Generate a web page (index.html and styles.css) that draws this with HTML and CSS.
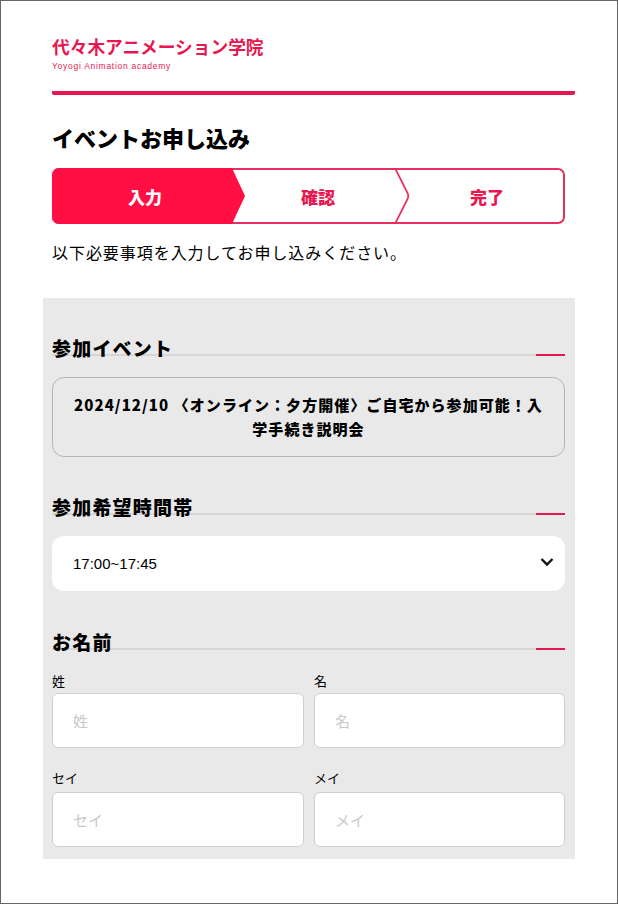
FILE: index.html
```html
<!DOCTYPE html>
<html lang="ja">
<head>
    <meta charset="UTF-8">
    <meta name="viewport" content="width=device-width, initial-scale=1.0">
    <title>イベントお申し込み</title>
    <link rel="stylesheet" href="styles.css">
</head>
<body>
    <div class="page">
        <div class="header">
            <div class="logo-main">代々木アニメーション学院</div>
            <div class="logo-sub">Yoyogi Animation academy</div>
        </div>

        <h1 class="title">イベントお申し込み</h1>

        <div class="steps">
            <div class="step step-current">入力</div>
            <div class="step step-middle">確認
                <svg class="step-arrow" width="16" height="56" viewBox="0 0 16 56">
                    <path d="M1 0 L13.5 25 Q15 28 13.5 31 L1 56" fill="none" stroke="#e8305f" stroke-width="1.7"/>
                </svg>
            </div>
            <div class="step step-last">完了</div>
        </div>

        <p class="lead">以下必要事項を入力してお申し込みください。</p>

        <form class="panel">
            <div class="section-head">
                <h2>参加イベント</h2>
            </div>
            <div class="event-box">2024/12/10 〈オンライン：夕方開催〉ご自宅から参加可能！入学手続き説明会</div>

            <div class="section-head section-time">
                <h2>参加希望時間帯</h2>
            </div>
            <div class="select-wrap">
                <select class="select">
                    <option>17:00~17:45</option>
                </select>
                <svg class="select-arrow" width="14" height="10" viewBox="0 0 14 10">
                    <path d="M1.5 2 L7 7.5 L12.5 2" fill="none" stroke="#111" stroke-width="2.4"/>
                </svg>
            </div>

            <div class="section-head section-name">
                <h2>お名前</h2>
            </div>
            <div class="name-grid">
                <label class="field">
                    <span class="field-label">姓</span>
                    <input class="input" type="text" placeholder="姓">
                </label>
                <label class="field">
                    <span class="field-label">名</span>
                    <input class="input" type="text" placeholder="名">
                </label>
                <label class="field">
                    <span class="field-label">セイ</span>
                    <input class="input" type="text" placeholder="セイ">
                </label>
                <label class="field">
                    <span class="field-label">メイ</span>
                    <input class="input" type="text" placeholder="メイ">
                </label>
            </div>
        </form>
    </div>
</body>
</html>
```

FILE: styles.css
```css
* {
    box-sizing: border-box;
}
html, body {
    margin: 0;
    height: 100%;
}
body {
    font-family: "Noto Sans CJK JP", "Noto Sans", sans-serif;
    color: #000;
    background-color: #fff;
}
.page {
    height: 904px;
    border: 1px solid #666;
    padding: 35px 42px 0 51px;
    overflow: hidden;
}
.header {
    height: 59px;
    border-bottom: 4px solid #e8174f;
    border-radius: 0 0 2px 2px;
}
.logo-main {
    font-size: 17.7px;
    line-height: 20px;
    font-weight: 700;
    color: #e8174f;
}
.logo-sub {
    font-family: "Liberation Sans", Arial, sans-serif;
    font-size: 8.5px;
    line-height: 10px;
    letter-spacing: 0.72px;
    margin-top: 5px;
    color: #e8174f;
}
.title {
    font-size: 22px;
    line-height: 32px;
    font-weight: 900;
    margin: 26px 0 15px;
}
.steps {
    display: flex;
    width: 513px;
    height: 56px;
    border: 2px solid #e8305f;
    border-radius: 7px;
    font-size: 17px;
    font-weight: 900;
    color: #e8174f;
}
.step {
    display: flex;
    align-items: center;
    justify-content: center;
    position: relative;
}
.step-current {
    width: 193px;
    margin: -2px 0 -2px -2px;
    padding-right: 7px;
    color: #fff;
    background-color: #ff0f43;
    border-radius: 7px 0 0 7px;
    clip-path: polygon(0 0, 180px 0, 193px 50%, 180px 100%, 0 100%);
}
.step-middle {
    width: 164px;
    padding-right: 18px;
}
.step-arrow {
    position: absolute;
    right: -1px;
    top: -2px;
}
.step-last {
    flex: 1;
    padding-left: 2px;
}
.lead {
    font-size: 16px;
    line-height: 24px;
    letter-spacing: 0.95px;
    margin: 16px 0 34px;
}
.panel {
    margin-left: -9px;
    width: 532px;
    height: 561px;
    padding: 35px 10px 0 9px;
    background-color: #e9e9e9;
}
.section-head {
    height: 34px;
    position: relative;
}
.section-head::before {
    content: "";
    position: absolute;
    left: 0;
    right: 0;
    top: 23px;
    height: 2px;
    background-color: #d6d6d6;
}
.section-head::after {
    content: "";
    position: absolute;
    right: 0;
    top: 23px;
    width: 29px;
    height: 2px;
    background-color: #e8174f;
}
.section-head h2 {
    position: relative;
    margin: -2px 0 0;
    font-size: 19px;
    line-height: 34px;
    font-weight: 900;
    letter-spacing: 1.2px;
}
.event-box {
    height: 80px;
    margin-top: 12px;
    padding: 0 16px;
    display: flex;
    align-items: center;
    justify-content: center;
    text-align: center;
    font-size: 15px;
    line-height: 24px;
    font-weight: 900;
    letter-spacing: 1.05px;
    border: 1px solid #b4b4b4;
    border-radius: 12px;
}
.section-time {
    margin-top: 35px;
}
.select-wrap {
    position: relative;
    margin-top: 12px;
}
.select {
    display: block;
    width: 100%;
    height: 55px;
    padding: 0 21px;
    appearance: none;
    border: none;
    border-radius: 12px;
    background-color: #fff;
    color: #000;
    font-family: "Liberation Sans", Arial, sans-serif;
    font-size: 15px;
}
.select-arrow {
    position: absolute;
    right: 11px;
    top: 21px;
}
.section-name {
    margin-top: 36px;
}
.name-grid {
    display: grid;
    grid-template-columns: 252px 251px;
    column-gap: 10px;
    row-gap: 21px;
    margin-top: 13px;
}
.field {
    display: block;
}
.field-label {
    display: block;
    font-size: 13px;
    line-height: 18px;
    margin: 0 0 3px;
}
.field:nth-child(n+3) .field-label {
    margin-bottom: 5px;
}
.input {
    display: block;
    width: 100%;
    height: 55px;
    padding: 0 20px;
    border: 1px solid #cfcfcf;
    border-radius: 6px;
    background-color: #fff;
    font-family: "Noto Sans CJK JP", sans-serif;
    font-size: 15px;
}
.input::placeholder {
    color: #c8c8c8;
}
```
